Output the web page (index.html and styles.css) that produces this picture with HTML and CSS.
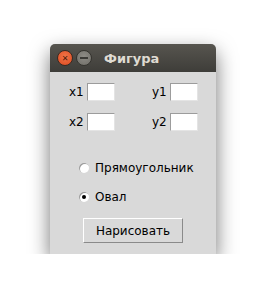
FILE: index.html
```html
<!DOCTYPE html>
<html lang="ru">
<head>
  <meta charset="UTF-8">
  <title>Фигура</title>
  <link rel="stylesheet" href="styles.css">
</head>

<body>
  <div class="screen">
    <div class="window">
      <!-- Title bar -->
      <div class="titlebar">
        <span class="wbtn close">&#x2715;</span>
        <span class="wbtn minimize"></span>
        <span class="title">Фигура</span>
      </div>

      <div class="content">
        <!-- Coordinates -->
        <div class="coords">
          <div class="field"><label>x1</label><input type="text" class="entry"></div>
          <div class="field"><label>y1</label><input type="text" class="entry"></div>
          <div class="field"><label>x2</label><input type="text" class="entry"></div>
          <div class="field"><label>y2</label><input type="text" class="entry"></div>
        </div>

        <!-- Shape choice -->
        <div class="choices">
          <label class="choice"><input type="radio" name="shape"> Прямоугольник</label>
          <label class="choice"><input type="radio" name="shape" checked> Овал</label>
        </div>

        <button class="draw-btn">Нарисовать</button>
      </div>
    </div>
  </div>
</body>
</html>
```

FILE: styles.css
```css
body {
  margin: 0;
  background-color: #ffffff;
  font-family: "DejaVu Sans", sans-serif;
  font-size: 12px;
  color: #000;
}
.screen {
  padding: 44px 0 0 50px;
}
.window {
  width: 166px;
  border-radius: 5px 5px 0 0;
  background-color: #d9d9d9;
  box-shadow: 0 8px 20px rgba(0,0,0,0.55);
}
.titlebar {
  height: 28px;
  display: flex;
  align-items: center;
  padding-left: 7px;
  border-radius: 5px 5px 0 0;
  background: linear-gradient(#57554f, #3e3d39);
}
.wbtn {
  width: 16px;
  height: 16px;
  border-radius: 50%;
  box-sizing: border-box;
  display: flex;
  align-items: center;
  justify-content: center;
}
.close {
  background: radial-gradient(circle at 50% 40%, #f37548, #dc4a20);
  border: 1px solid #3a2a22;
  color: #4a1c0c;
  font-size: 8px;
  font-weight: bold;
}
.minimize {
  margin-left: 3px;
  background: radial-gradient(circle at 50% 40%, #8e8c86, #6f6d67);
  border: 1px solid #35342f;
  position: relative;
}
.minimize::after {
  content: "";
  width: 8px;
  height: 2px;
  background-color: #3c3b37;
}
.title {
  margin-left: 12px;
  font-weight: bold;
  font-size: 13px;
  color: #dfdbd2;
}
.content {
  padding: 11px 0 11px 19px;
  display: flex;
  flex-direction: column;
}
.coords {
  display: grid;
  grid-template-columns: 46px 46px;
  column-gap: 37px;
  row-gap: 12px;
}
.field {
  display: flex;
  align-items: center;
}
.field label {
  width: 18px;
}
.entry {
  width: 28px;
  height: 18px;
  box-sizing: border-box;
  margin: 0;
  padding: 0;
  background-color: #ffffff;
  border: 1px solid;
  border-color: #9c9c9c #e4e4e4 #e4e4e4 #9c9c9c;
}
.choices {
  display: flex;
  flex-direction: column;
  gap: 11px;
  margin-top: 28px;
  margin-left: 10px;
}
.choice {
  height: 18px;
  display: flex;
  align-items: center;
  gap: 6px;
}
.choice input {
  appearance: none;
  width: 10px;
  height: 10px;
  margin: 0;
  border-radius: 50%;
  background-color: #ffffff;
  box-shadow: inset 1px 1px 0 #9a9a9a;
  display: flex;
  align-items: center;
  justify-content: center;
}
.choice input:checked::after {
  content: "";
  width: 4px;
  height: 4px;
  border-radius: 50%;
  background-color: #000;
}
.draw-btn {
  margin-top: 12px;
  margin-left: 14px;
  width: 100px;
  height: 25px;
  padding: 0;
  font-family: "DejaVu Sans", sans-serif;
  font-size: 12px;
  color: #000;
  background-color: #d9d9d9;
  border: 1px solid;
  border-color: #ffffff #8a8a8a #8a8a8a #ffffff;
}
```
